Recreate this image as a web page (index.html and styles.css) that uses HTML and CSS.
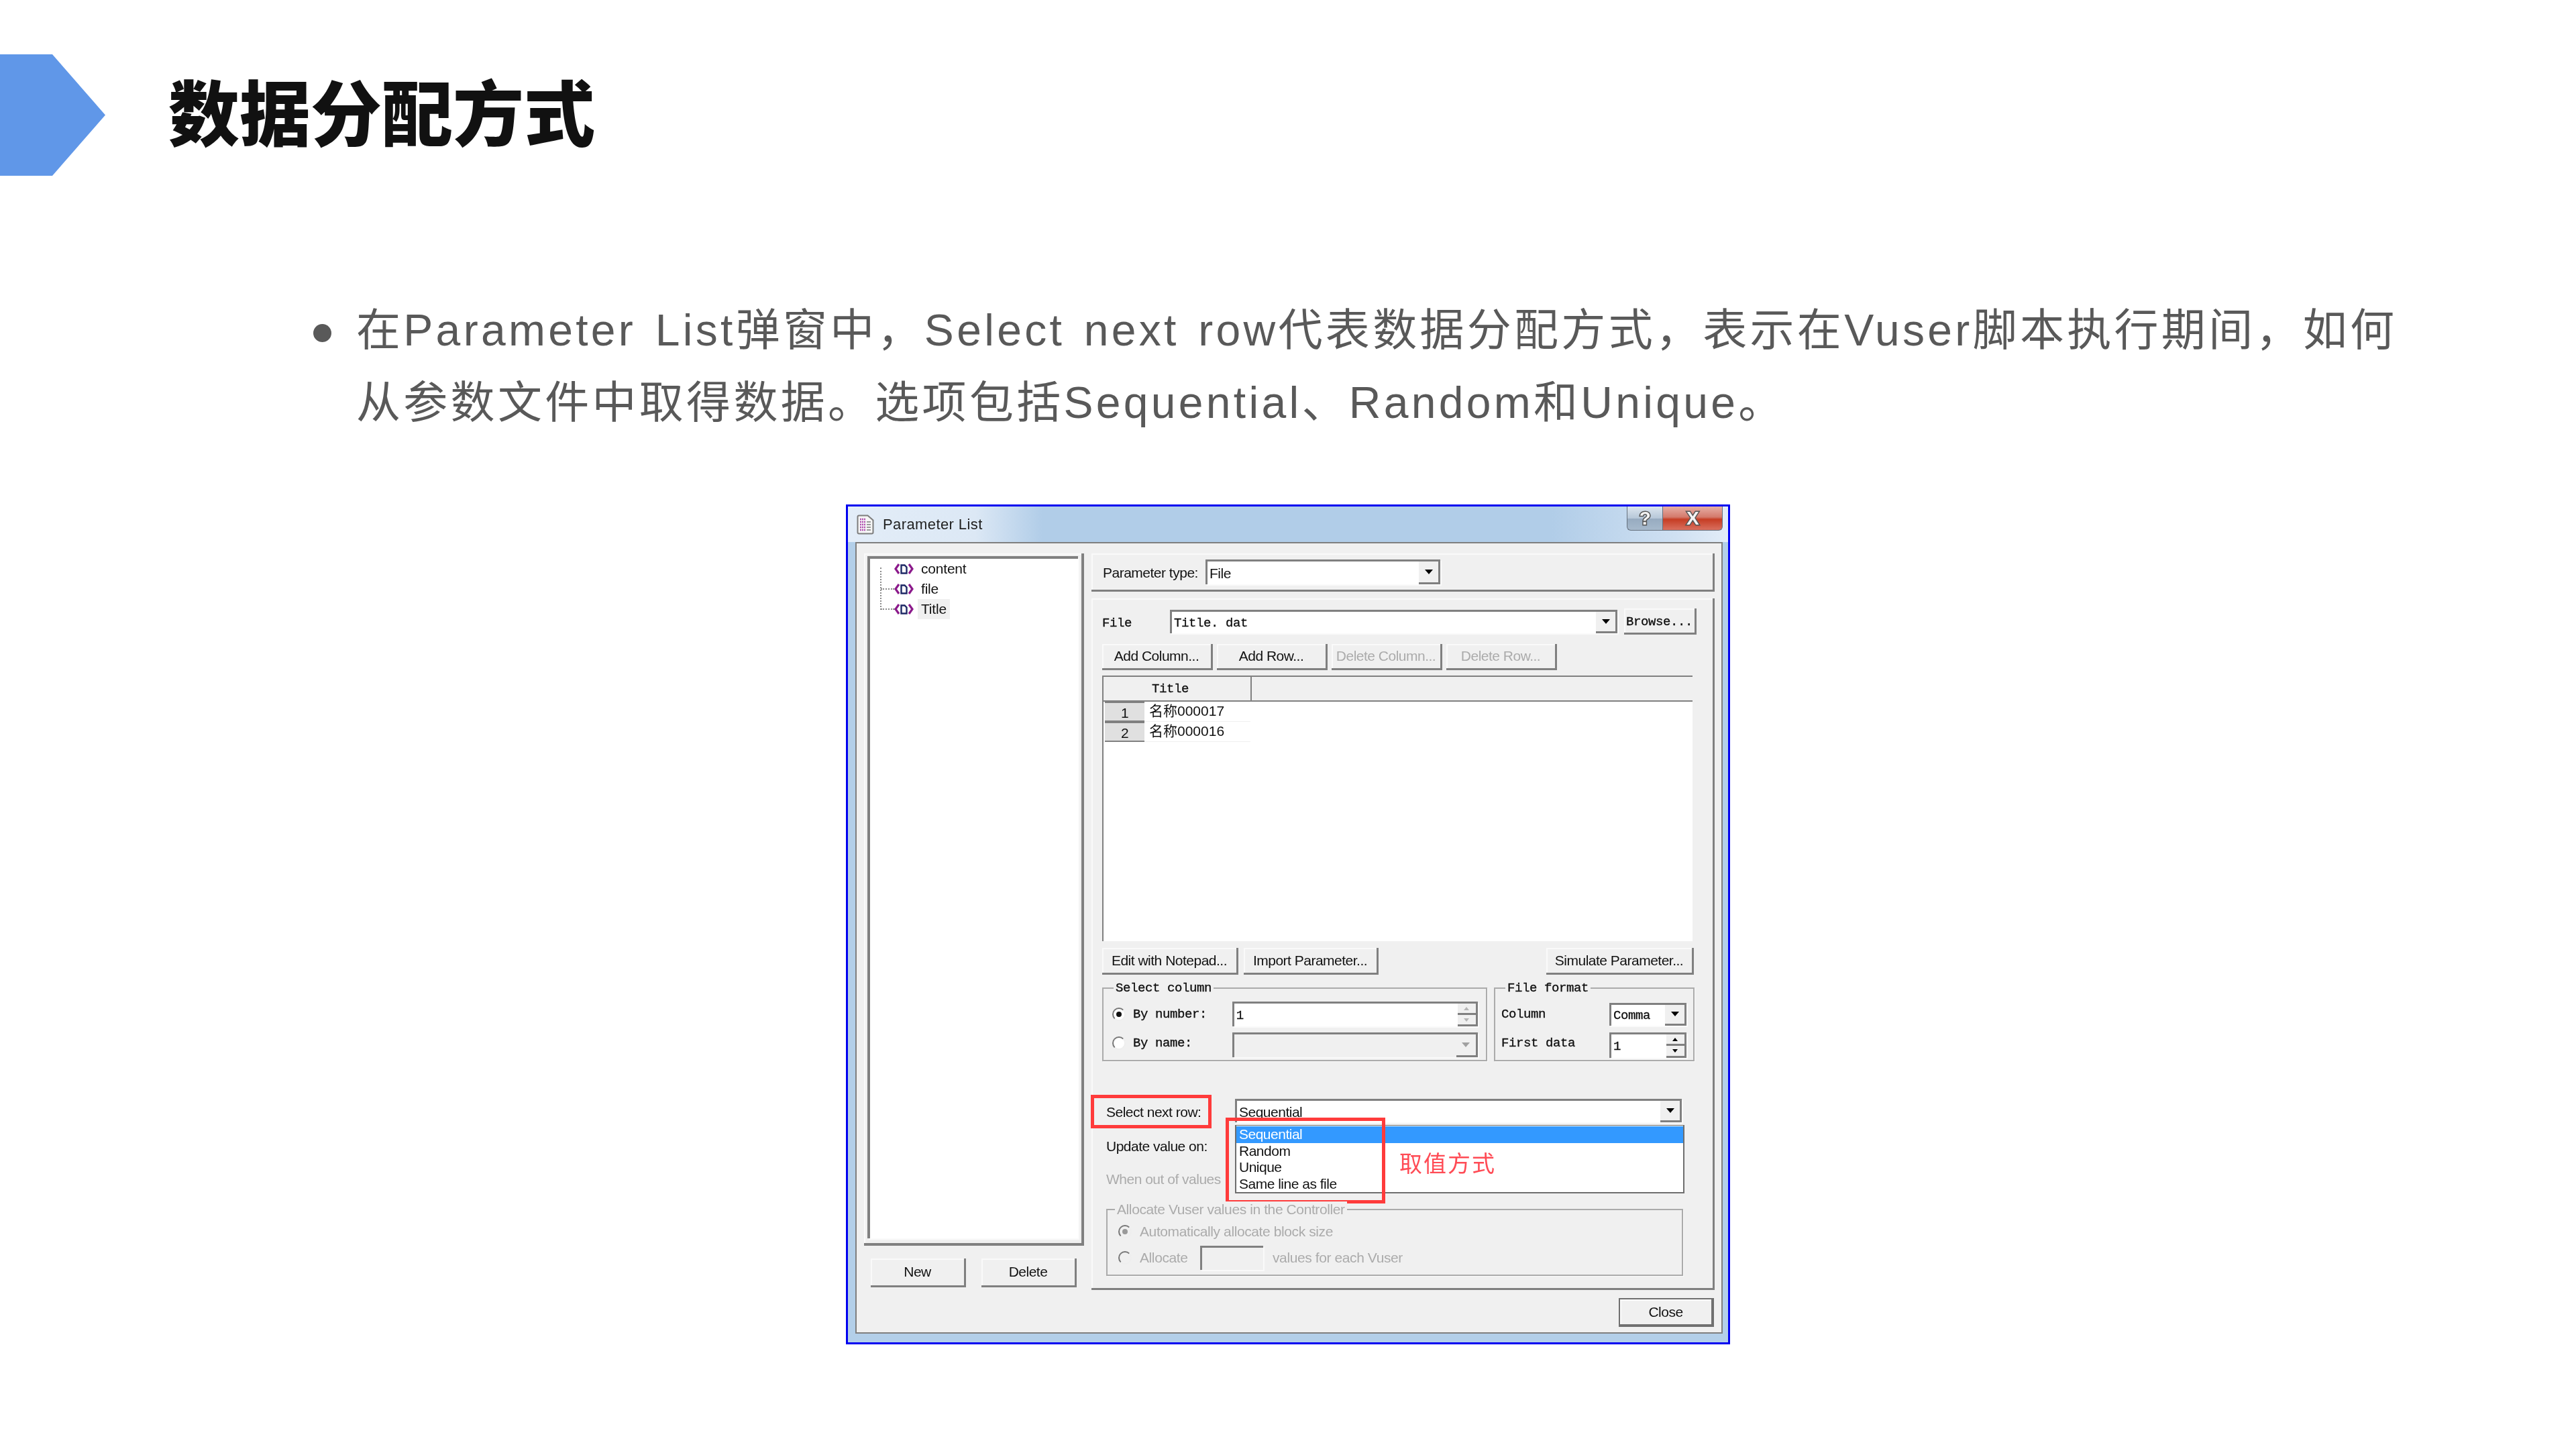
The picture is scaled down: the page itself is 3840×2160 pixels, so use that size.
FILE: index.html
```html
<!DOCTYPE html>
<html lang="zh-CN">

<head>
	<meta charset="utf-8">
	<title>数据分配方式</title>
	<link rel="stylesheet" href="styles.css">
</head>

<body>
	<header class="slide-head">
		<div class="arrow"></div>
		<h1>数据分配方式</h1>
	</header>

	<ul class="points">
		<li>在Parameter List弹窗中，Select next row代表数据分配方式，表示在Vuser脚本执行期间，如何从参数文件中取得数据。选项包括Sequential、Random和Unique。</li>
	</ul>

	<div class="dialog">
		<div class="titlebar">
			<svg class="title-icon" width="26" height="30" viewBox="0 0 26 30">
				<path d="M1.5 3.5q0-2 2-2h13l8 7v18q0 2-2 2h-19q-2 0-2-2z" fill="#f6f6f6" stroke="#7d7d7d" stroke-width="2"/>
				<path d="M5 7h8M5 11h8M5 15h8M5 19h8M5 23h8" stroke="#b04fb0" stroke-width="2.4" stroke-dasharray="2 1"/>
				<path d="M15 11h6M15 15h6M15 19h6M15 23h6" stroke="#9a9a9a" stroke-width="2"/>
			</svg>
			<span class="title-text">Parameter List</span>
			<div class="win-btns">
				<span class="win-help">?</span>
				<span class="win-close">X</span>
			</div>
		</div>

		<div class="client">
			<div class="columns">
				<div class="left-col">
					<div class="tree-panel">
						<ul class="tree">
							<li><svg width="29" height="16" viewBox="0 0 29 16"><path d="M7 1 2 8l5 7M22 1l5 7-5 7" fill="none" stroke="#8b1a8b" stroke-width="3.200"/><path d="M10.500 2.500h5l3 3v9h-8z" fill="#fff" stroke="#1f2a66" stroke-width="2.400"/></svg><span>content</span></li>
							<li><svg width="29" height="16" viewBox="0 0 29 16"><path d="M7 1 2 8l5 7M22 1l5 7-5 7" fill="none" stroke="#8b1a8b" stroke-width="3.200"/><path d="M10.500 2.500h5l3 3v9h-8z" fill="#fff" stroke="#1f2a66" stroke-width="2.400"/></svg><span>file</span></li>
							<li><svg width="29" height="16" viewBox="0 0 29 16"><path d="M7 1 2 8l5 7M22 1l5 7-5 7" fill="none" stroke="#8b1a8b" stroke-width="3.200"/><path d="M10.500 2.500h5l3 3v9h-8z" fill="#fff" stroke="#1f2a66" stroke-width="2.400"/></svg><span class="tree-selected">Title</span></li>
						</ul>
					</div>
					<div class="left-btns">
						<button type="button" class="btn">New</button>
						<button type="button" class="btn">Delete</button>
					</div>
				</div>

				<div class="right-col">
					<div class="type-panel">
						<span class="type-label">Parameter type:</span>
						<div class="combo type-combo"><span class="combo-text">File</span><span class="drop"><i></i></span></div>
					</div>

					<div class="file-panel">
						<div class="file-row">
							<span class="mono file-label">File</span>
							<div class="combo file-combo"><span class="combo-text mono">Title. dat</span><span class="drop"><i></i></span></div>
							<button type="button" class="btn mono browse">Browse...</button>
						</div>

						<div class="btn-row">
							<button type="button" class="btn">Add Column...</button>
							<button type="button" class="btn">Add Row...</button>
							<button type="button" class="btn" disabled>Delete Column...</button>
							<button type="button" class="btn" disabled>Delete Row...</button>
						</div>

						<div class="data-grid">
							<div class="grid-head"><span class="mono head-title">Title</span></div>
							<div class="grid-row"><span class="row-no">1</span><span class="row-val">名称000017</span></div>
							<div class="grid-row"><span class="row-no">2</span><span class="row-val">名称000016</span></div>
						</div>

						<div class="action-row">
							<button type="button" class="btn edit-btn">Edit with Notepad...</button>
							<button type="button" class="btn import-btn">Import Parameter...</button>
							<button type="button" class="btn simulate-btn">Simulate Parameter...</button>
						</div>

						<div class="group-row">
							<div class="group select-col mono">
								<span class="group-title">Select column</span>
								<div class="col-line">
									<span class="radio checked"></span>
									<span class="col-label">By number:</span>
									<div class="combo col-input"><span class="combo-text">1</span><span class="spin off"><b></b><b></b></span></div>
								</div>
								<div class="col-line">
									<span class="radio"></span>
									<span class="col-label">By name:</span>
									<div class="combo col-input col-off"><span class="combo-text"></span><span class="drop off"><i></i></span></div>
								</div>
							</div>
							<div class="group file-format mono">
								<span class="group-title">File format</span>
								<div class="col-line">
									<span class="fmt-label">Column</span>
									<div class="combo fmt-input"><span class="combo-text">Comma</span><span class="drop"><i></i></span></div>
								</div>
								<div class="col-line">
									<span class="fmt-label">First data</span>
									<div class="combo fmt-input fmt-spin"><span class="combo-text">1</span><span class="spin"><b></b><b></b></span></div>
								</div>
							</div>
						</div>

						<div class="next-area">
							<div class="next-line">
								<span class="next-label">Select next row:</span>
								<div class="combo next-combo"><span class="combo-text">Sequential</span><span class="drop"><i></i></span></div>
							</div>
							<div class="update-line">Update value on:</div>
							<div class="out-line">When out of values</div>

							<ul class="dropdown">
								<li class="picked">Sequential</li>
								<li>Random</li>
								<li>Unique</li>
								<li>Same line as file</li>
							</ul>
							<span class="note">取值方式</span>
							<div class="mark mark-label"></div>
							<div class="mark mark-list"></div>

							<div class="group alloc">
								<span class="group-title">Allocate Vuser values in the Controller</span>
								<div class="alloc-line"><span class="radio checked"></span><span>Automatically allocate block size</span></div>
								<div class="alloc-line"><span class="radio"></span><span class="alloc-word">Allocate</span><span class="alloc-box"></span><span>values for each Vuser</span></div>
							</div>
						</div>
					</div>
				</div>
			</div>
			<div class="close-row">
				<button type="button" class="btn close-btn">Close</button>
			</div>
		</div>
	</div>
</body>

</html>
```

FILE: styles.css
```css
* { box-sizing: border-box; }
body { margin: 0; width: 3840px; height: 2160px; background: #FFF; overflow: hidden; font-family: "Liberation Sans", "Noto Sans CJK SC", sans-serif; }
ul { margin: 0; padding: 0; list-style: none; }

/* slide */
.slide-head { display: flex; align-items: center; height: 181px; margin-top: 81px; }
.arrow { width: 157px; height: 181px; background: #6097E8; clip-path: polygon(0 0, 78px 0, 100% 50%, 78px 100%, 0 100%); }
h1 { margin: -18px 0 0 94px; font-size: 106px; line-height: 1; font-weight: 900; color: #111; font-family: "Noto Sans CJK SC", sans-serif; }

.points { margin: 176px 0 0 467px; width: 3110px; font-size: 66px; line-height: 108px; letter-spacing: 4.3px; word-spacing: 6px; color: #595959; }
.points li { position: relative; padding-left: 64px; }
.points li::before { content: ""; position: absolute; left: 0; top: 45px; width: 27px; height: 27px; border-radius: 50%; background: #595959; }

/* dialog */
.dialog { width: 1318px; height: 1252px; margin: 98px 0 0 1261px; border: 3px solid #0000F0; background: #B3CFE9; font-size: 21px; letter-spacing: -.5px; color: #111; filter: blur(.5px); }
.titlebar { display: flex; align-items: flex-start; height: 53px; padding: 12px 8px 0 13px; background: linear-gradient(to right, #E3EDF8, #DCE8F5 190px, #B1CDE8 290px, #B1CDE8 80%, #CFE0F2 94%, #E3EDF8); }
.title-text { margin: 2px 0 0 13px; font-size: 22px; letter-spacing: .4px; color: #222; }
.win-btns { display: flex; height: 36px; margin: -12px 0 0 auto; }
.win-help, .win-close { display: flex; align-items: center; justify-content: center; font-weight: bold; font-size: 28px; color: #F4F4F4; border: 1px solid #66717E; border-top: 0; -webkit-text-stroke: 3px #555; paint-order: stroke fill; }
.win-help { width: 53px; border-radius: 0 0 0 6px; border-right: 0; background: linear-gradient(#DDE6EF, #B6C7D8 50%, #97ABC0 52%, #A6B9CC); }
.win-close { width: 90px; border-radius: 0 0 6px 0; background: linear-gradient(#E6AFA6, #D47A6C 45%, #C63D24 55%, #D9705F); }

.client { width: 1293px; height: 1180px; margin-left: 11px; padding: 15px 10px 0 11px; border: 2px solid #7F7F7F; border-bottom-width: 2px; background: #F0F0F0; }
.columns { display: flex; gap: 11px; height: 1098px; }
.left-col { width: 328px; }
.right-col { width: 929px; display: flex; flex-direction: column; gap: 10px; }

.mono { font-family: "Liberation Mono", "Noto Sans CJK SC", monospace; font-size: 19px; letter-spacing: -.4px; -webkit-text-stroke: .3px #000; }

/* win32 edges */
.btn { display: block; height: 39px; padding: 0; font: inherit; letter-spacing: inherit; color: #111; white-space: nowrap; background: #F0F0F0; border: solid #808080; border-width: 0 3px 3px 0; box-shadow: inset 2px 2px 0 #FAFAFA; }
.btn.mono { padding-top: 4px; font-family: "Liberation Mono", monospace; font-size: 19px; letter-spacing: -.4px; }
.btn:disabled { color: #ABABAB; }
.combo { display: flex; align-items: stretch; background: #FFF; border: solid #808080; border-width: 3px 0 0 3px; box-shadow: 2px 2px 0 #FAFAFA; }
.combo-text { flex: 1; padding: 2px 0 0 3px; align-self: center; white-space: nowrap; }
.drop { display: flex; align-items: center; justify-content: center; width: 32px; background: #F0F0F0; border: solid #808080; border-width: 0 3px 3px 0; }
.drop i { width: 0; height: 0; border: solid transparent; border-width: 7px 6px 0; border-top-color: #000; }
.drop.off { background: none; }
.drop.off i { border-top-color: #A0A0A0; }
.spin { display: flex; flex-direction: column; width: 30px; }
.spin b { flex: 1; position: relative; background: #F0F0F0; border: solid #808080; border-width: 0 3px 3px 0; }
.spin b::after { content: ""; position: absolute; left: 9px; top: 5px; border: solid transparent; border-width: 0 4px 5px; border-bottom-color: #000; }
.spin b + b::after { border-width: 5px 4px 0; border-color: #000 transparent transparent; }
.spin.off b::after { border-bottom-color: #B5B5B5; }
.spin.off b + b::after { border-color: #B5B5B5 transparent transparent; }

/* tree */
.tree-panel { height: 1032px; padding: 4px 5px 7px; background: #F0F0F0; border: solid #808080; border-width: 0 4px 4px 0; box-shadow: inset 2px 2px 0 #FAFAFA; }
.tree { position: relative; height: 100%; padding: 0 0 0 36px; background: #FFF; border: solid #808080; border-width: 4px 0 0 4px; box-shadow: 2px 2px 0 #FAFAFA; }
.tree::before { content: ""; position: absolute; left: 15px; top: 13px; width: 20px; height: 61px; border: dotted #8A8A8A; border-width: 0 0 2px 2px; }
.tree li { position: relative; display: flex; align-items: center; height: 30px; }
.tree li:first-child { margin-top: 0; }
.tree li + li::before { content: ""; position: absolute; left: -20px; top: 14px; width: 20px; border-top: 2px dotted #8A8A8A; }
.tree li span { display: block; height: 30px; padding: 0 5px; margin-left: 6px; line-height: 30px; font-size: 21px; letter-spacing: -.2px; }
.tree-selected { background: #F0F0F0; }
.left-btns { display: flex; gap: 23px; margin: 19px 0 0 10px; }
.left-btns .btn { width: 142px; height: 43px; }

/* right side */
.type-panel { display: flex; align-items: center; height: 57px; padding: 0 0 0 17px; border: solid #808080; border-width: 0 3px 3px 0; box-shadow: inset 2px 2px 0 #FAFAFA; }
.type-label { width: 153px; margin-top: 3px; }
.type-combo { width: 350px; height: 37px; }
.file-panel { height: 1031px; padding: 15px 0 0 16px; border: solid #808080; border-width: 0 3px 3px 0; box-shadow: inset 2px 2px 0 #FAFAFA; }
.file-row { display: flex; align-items: center; height: 39px; }
.file-label { width: 101px; padding-top: 4px; }
.file-combo { width: 667px; height: 35px; }
.browse { width: 108px; margin-left: 10px; }
.btn-row { display: flex; gap: 6px; margin-top: 14px; }
.btn-row .btn { width: 165px; }

.data-grid { width: 880px; height: 396px; margin-top: 8px; background: #FFF; border: solid #808080; border-width: 2px 0 0 2px; }
.grid-head { display: flex; height: 37px; background: #F0F0F0; border-bottom: 2px solid #808080; }
.head-title { display: block; width: 219px; margin-left: 2px; padding-right: 22px; text-align: center; line-height: 36px; border-right: 2px solid #808080; }
.grid-row { display: flex; height: 30px; }
.row-no { width: 59px; margin-left: 2px; text-align: center; line-height: 30px; background: #E0E0E0; border: solid #808080; border-width: 2px 0; }
.row-val { width: 158px; padding-left: 7px; line-height: 28px; letter-spacing: 0; border-bottom: 1px solid #F0F0F0; }

.action-row { display: flex; margin-top: 10px; width: 882px; }
.action-row .btn { height: 40px; }
.edit-btn { width: 203px; }
.import-btn { width: 201px; margin-left: 8px; }
.simulate-btn { width: 220px; margin-left: auto; }

.group-row { display: flex; gap: 10px; margin-top: 19px; }
.group { position: relative; border: 2px solid #ABABAB; box-shadow: 1px 1px 0 #FAFAFA; }
.group-title { position: absolute; left: 15px; top: -13px; padding: 0 3px; line-height: 24px; background: #F0F0F0; white-space: nowrap; }
.select-col { width: 574px; height: 110px; padding: 19px 12px 0 13px; }
.file-format { width: 299px; height: 110px; padding: 19px 10px 0 9px; }
.col-line { display: flex; align-items: center; height: 37px; margin-bottom: 9px; }
.col-label { width: 148px; margin-left: 11px; }
.col-input { width: 367px; height: 100%; }
.col-off { background: #F0F0F0; }
.fmt-label { width: 161px; }
.fmt-input { width: 115px; height: 34px; }
.fmt-spin { height: 38px; }
.col-line + .col-line .radio, .col-line + .col-line .col-label, .col-line + .col-line .fmt-label { margin-bottom: 5px; }
.radio { flex: none; position: relative; width: 20px; height: 20px; background: #FFF; border: 2px solid; border-color: #777 #EEE #EEE #777; border-radius: 50%; }
.radio.checked::after { content: ""; position: absolute; left: 4px; top: 4px; width: 8px; height: 8px; border-radius: 50%; background: #111; }

.next-area { position: relative; margin-top: 56px; padding-left: 6px; }
.next-line { display: flex; align-items: center; height: 35px; }
.next-label { width: 192px; padding-top: 4px; }
.next-combo { width: 666px; height: 100%; }
.update-line { height: 34px; margin-top: 19px; line-height: 34px; }
.out-line { height: 34px; margin-top: 15px; line-height: 34px; color: #ABABAB; }
.dropdown { position: absolute; left: 198px; top: 39px; width: 670px; height: 102px; padding-top: 1px; background: #FFF; border: 2px solid #6E6E6E; border-top-width: 1px; line-height: 24.5px; }
.dropdown li { padding-left: 4px; }
.dropdown .picked { background: #3399FF; color: #FFF; }
.note { position: absolute; left: 443px; top: 75px; font-size: 34px; line-height: 44px; letter-spacing: 2px; color: #FF4B55; }
.mark { position: absolute; border: 5px solid #FF3B3B; }
.mark-label { left: -17px; top: -6px; width: 180px; height: 50px; }
.mark-list { left: 184px; top: 28px; width: 238px; height: 128px; }

.alloc { width: 860px; height: 100px; margin: 27px 0 0; padding: 20px 0 0 16px; color: #ABABAB; letter-spacing: -.4px; }
.alloc .group-title { left: 11px; }
.alloc .radio { background: #F0F0F0; margin-right: 12px; }
.alloc .radio.checked::after { background: #9A9A9A; }
.alloc-line { display: flex; align-items: center; height: 24px; }
.alloc-line + .alloc-line { height: 36px; margin-top: 9px; }
.alloc-word { width: 90px; }
.alloc-box { width: 94px; height: 36px; margin-right: 14px; border: solid #808080; border-width: 3px 0 0 3px; box-shadow: 2px 2px 0 #FAFAFA; }

.close-row { display: flex; justify-content: flex-end; margin: 12px 1px 0 0; }
.close-btn { width: 142px; height: 43px; border: 2px solid #707070; border-width: 2px 4px 4px 2px; }
```
